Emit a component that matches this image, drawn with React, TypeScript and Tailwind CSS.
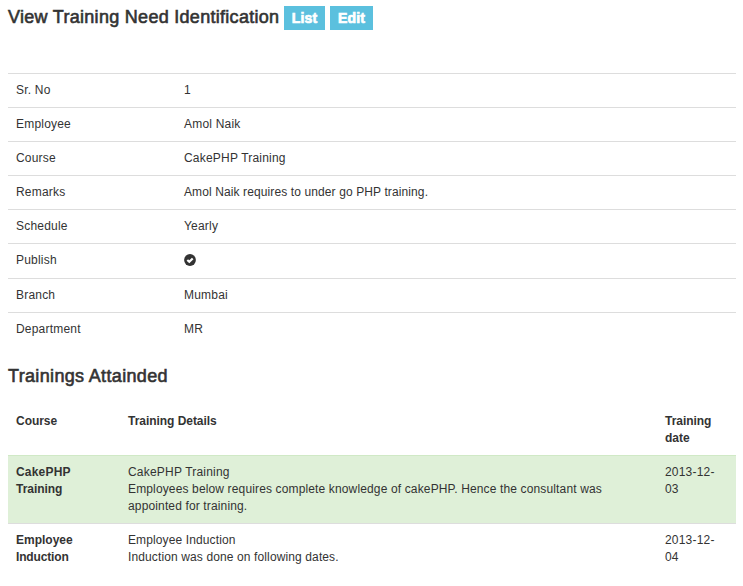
import React from "react";

const CheckIcon = () => (
  <svg viewBox="0 0 12 12" className="mt-0.5 block h-3 w-3">
    <circle cx="6" cy="6" r="5.9" fill="#333" />
    <path d="M3.3 6 L5.3 7.8 L8.7 4.5" fill="none" stroke="#fff" strokeWidth="2.2" />
  </svg>
);

const details: { label: string; value: React.ReactNode; row: string }[] = [
  { label: "Sr. No", value: "1", row: "h-[34px]" },
  { label: "Employee", value: "Amol Naik", row: "h-[34px]" },
  { label: "Course", value: "CakePHP Training", row: "h-[34px]" },
  {
    label: "Remarks",
    value: <span className="tracking-[0.11px]">Amol Naik requires to under go PHP training.</span>,
    row: "h-[34px]",
  },
  { label: "Schedule", value: "Yearly", row: "h-[34px]" },
  { label: "Publish", value: <CheckIcon />, row: "h-[35px]" },
  { label: "Branch", value: "Mumbai", row: "h-[34px]" },
  { label: "Department", value: "MR", row: "h-[34px]" },
];

const headingClass =
  "text-[18px] leading-5 font-normal whitespace-nowrap [-webkit-text-stroke:0.6px_#333]";

const badgeClass =
  "flex h-6 items-center justify-center bg-[#5bc0de] text-[14px] font-bold leading-none tracking-[0.2px] text-white [-webkit-text-stroke:0.7px_#fff]";

export default function App() {
  return (
    <main className="h-[586px] w-[743px] overflow-hidden bg-white pr-[7px] pl-2 font-['Liberation_Sans',Arial,sans-serif] text-[12px] leading-[17px] tracking-[0.2px] text-[#333]">
      <header className="flex h-[73px] items-start pt-1.5">
        <h4 className={`mt-px w-[276px] tracking-[0.29px] ${headingClass}`}>View Training Need Identification</h4>
        <a className={`w-[41px] ${badgeClass}`}>List</a>
        <a className={`ml-[5px] w-[43px] ${badgeClass}`}>Edit</a>
      </header>

      <dl>
        {details.map((d) => (
          <div key={d.label} className={`flex border-t border-[#ddd] px-2 pt-2 ${d.row}`}>
            <dt className="w-[168px]">{d.label}</dt>
            <dd>{d.value}</dd>
          </div>
        ))}
      </dl>

      <h4 className={`mt-5 tracking-[0.34px] ${headingClass}`}>Trainings Attainded</h4>

      <section className="mt-[18px]">
        <div className="flex h-[51px] px-2 pt-[9px] font-bold tracking-[-0.04px]">
          <div className="w-28">Course</div>
          <div className="w-[537px]">Training Details</div>
          <div>Training<br />date</div>
        </div>
        <div className="flex h-[68px] border-t border-[#d0e9c6] bg-[#dff0d8] px-2 pt-2">
          <div className="w-28 font-bold">CakePHP<br /><span className="tracking-[-0.04px]">Training</span></div>
          <div className="w-[537px]">
            CakePHP Training<br />
            <span className="tracking-[0.14px]">
              Employees below requires complete knowledge of cakePHP. Hence the consultant was<br />
              appointed for training.
            </span>
          </div>
          <div>2013-12-<br />03</div>
        </div>
        <div className="flex border-t border-[#ddd] px-2 pt-2">
          <div className="w-28 font-bold tracking-[0px]">Employee<br /><span className="tracking-[-0.15px]">Induction</span></div>
          <div className="w-[537px] tracking-[0.12px]">Employee Induction<br />Induction was done on following dates.</div>
          <div>2013-12-<br />04</div>
        </div>
      </section>
    </main>
  );
}
